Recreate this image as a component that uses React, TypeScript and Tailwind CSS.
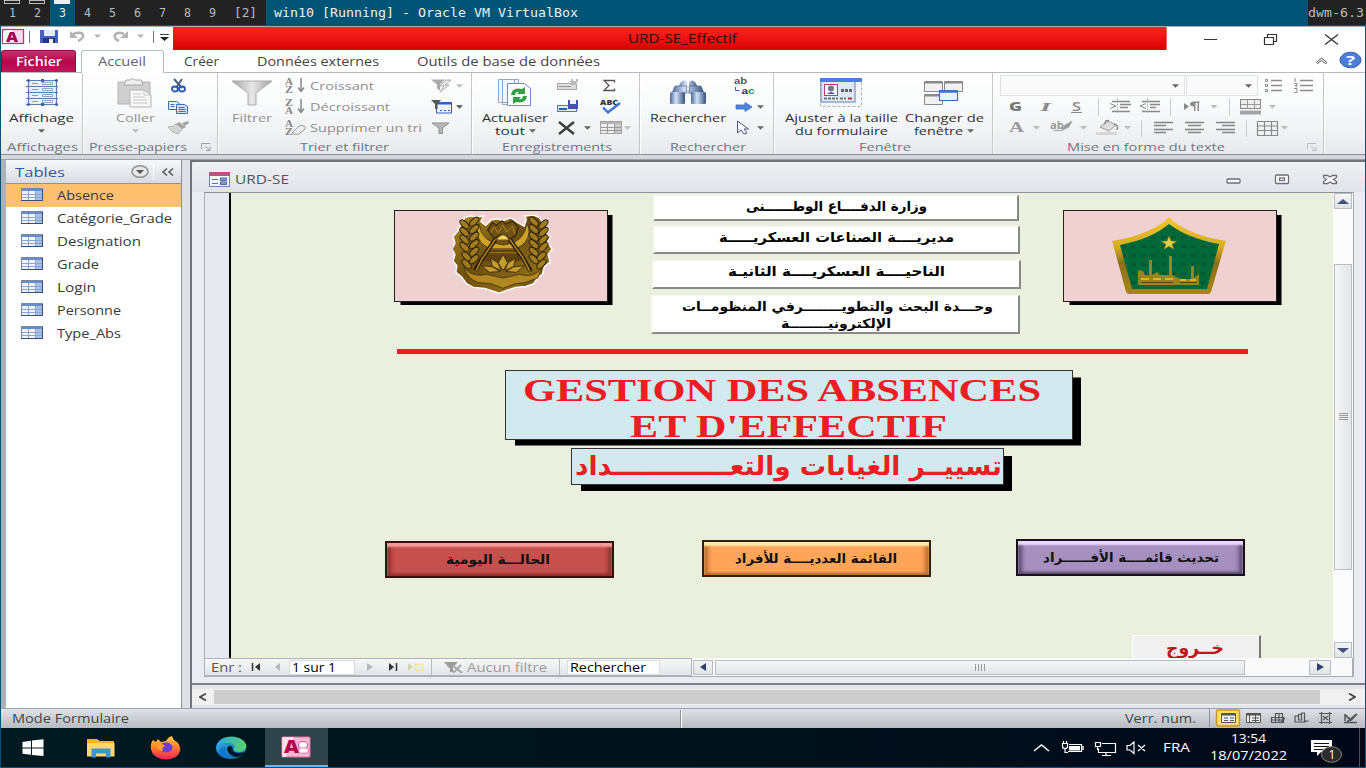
import React, { useLayoutEffect, useRef } from "react";

type P = { className?: string; children?: React.ReactNode };

/* Text stretched horizontally to fill the width of its box. */
function Fit({ className = "", children, rtl = false }: P & { rtl?: boolean }) {
  const outer = useRef<HTMLDivElement>(null);
  const inner = useRef<HTMLSpanElement>(null);
  useLayoutEffect(() => {
    const o = outer.current;
    const i = inner.current;
    if (o && i && i.offsetWidth > 0) {
      i.style.transform = `scaleX(${o.clientWidth / i.getBoundingClientRect().width})`;
    }
  }, []);
  return (
    <div ref={outer} className={`shrink-0 whitespace-nowrap text-left ${className}`}>
      <span ref={inner} dir={rtl ? "rtl" : "ltr"} className="inline-block origin-left">
        {children}
      </span>
    </div>
  );
}

function Arrow({ className = "", color = "#666" }: { className?: string; color?: string }) {
  return (
    <svg className={`shrink-0 ${className}`} width="7" height="4" viewBox="0 0 7 4">
      <path d="M0 0.3h7L3.5 3.8z" fill={color} />
    </svg>
  );
}

function Group({ className = "", label, launcher = "", children }: P & { label: React.ReactNode; launcher?: string }) {
  return (
    <div className={`flex shrink-0 flex-col border-r border-[#c3c7cc] shadow-[1px_0_0_#fff] ${className}`}>
      <div className="flex h-[67px]">{children}</div>
      <div className="flex h-[15px] items-center pt-px text-[#70757f]">
        {label}
        {launcher && (
          <svg className={`shrink-0 ${launcher}`} width="10" height="8" viewBox="0 0 10 8" fill="none" stroke="#9a9ea5">
            <path d="M0.5 6V0.5H9M4 3l4.5 4M9 3.5V7.5H5" />
          </svg>
        )}
      </div>
    </div>
  );
}

const lab = "leading-[14px] text-[11.5px] h-[14px]";
const dark = "leading-[14px] text-[11.5px] h-[14px] text-[#303030]";
const dark2 = "leading-[13px] text-[11.5px] h-[13px] text-[#303030]";
const mut = "leading-[14px] text-[11.5px] h-[14px] text-[#8f8f8f]";

function TableIcon({ muted = false }: { muted?: boolean }) {
  const s = muted ? "#a3a3a3" : "#7488ac";
  return (
    <svg width="22" height="13" viewBox="0 0 22 13" className="shrink-0">
      <rect x="0.5" y="0.5" width="21" height="12" fill={muted ? "#eee" : "#eef4fc"} stroke={s} />
      <rect x="1" y="1" width="20" height="2" fill={muted ? "#b5b5b5" : "#6c8cc4"} />
      <rect x="14" y="3" width="7" height="9" fill={muted ? "#ccc" : "#a9c0e6"} />
      <path d="M1 6.500h20M1 9.500h20M7.500 3v9M14.500 3v9" stroke={muted ? "#999" : "#8ea4c8"} fill="none" />
      {!muted && <path d="M0 12.500h22M21.500 1v12" stroke="#33507e" fill="none" />}
    </svg>
  );
}

function SortIcon({ a, b, eraser = false }: { a: string; b: string; eraser?: boolean }) {
  return (
    <svg width="22" height="18" viewBox="0 0 22 18" className="shrink-0">
      <text x="0" y="7.500" fontSize="9.500" fontFamily="Liberation Serif, serif" fontWeight="700" fill="#858585" textLength="8" lengthAdjust="spacingAndGlyphs">{a}</text>
      <text x="0" y="16.200" fontSize="9.500" fontFamily="Liberation Serif, serif" fontWeight="700" fill="#858585" textLength="8" lengthAdjust="spacingAndGlyphs">{b}</text>
      {eraser ? (
        <path d="M8 13l6-6q2-1 5 0 2 1 1 3l-6 5q-2 1-5 0-2-1-1-2z" fill="#eee" stroke="#999" />
      ) : (
        <path d="M16 1v13M13 10.500l3 4 3-4" fill="none" stroke="#888" strokeWidth="1.500" />
      )}
    </svg>
  );
}

function QuickAccess() {
  return (
    <svg width="172" height="23" viewBox="1 27 172 23" className="shrink-0">
      <rect x="2.500" y="29.500" width="21" height="14" fill="#f8dcea" stroke="#b63a78" strokeWidth="1.300" />
      <path d="M3 43V33l4-3h5L7 43z" fill="#fff" />
      <text x="6" y="42" fontSize="14" fontWeight="800" fontFamily="Open Sans, sans-serif" fill="#a50050" textLength="12" lengthAdjust="spacingAndGlyphs">A</text>
      <path d="M29.500 31v12M153.500 31v12" stroke="#777" />
      <rect x="40" y="30" width="18" height="13" fill="#4a5dc0" />
      <rect x="44" y="30" width="11" height="6" fill="#e4ebfa" />
      <rect x="43" y="38" width="12" height="5" fill="#27327c" />
      <rect x="49" y="39" width="4" height="4" fill="#eee" />
      <path d="M73 34q9-3 10 1 1 3-5 6" fill="none" stroke="#b3b3b3" strokeWidth="2.600" />
      <path d="M70 31v7h8z" fill="#b3b3b3" />
      <path d="M119 41q-6-3-4-6 2-4 9-1" fill="none" stroke="#b3b3b3" strokeWidth="2.600" />
      <path d="M128 31v7h-8z" fill="#b3b3b3" />
      <path d="M94 34.500h7l-3.500 3.500zM137 34.500h7l-3.500 3.500z" fill="#b5b5b5" />
      <path d="M160 34.500h9" stroke="#444" />
      <path d="M160 37h9l-4.500 4z" fill="#222" />
    </svg>
  );
}

function Tag({ n, on = false, box = false, solid = false }: { n: string; on?: boolean; box?: boolean; solid?: boolean }) {
  return (
    <div className={`relative flex w-[25px] items-center justify-center ${on ? "bg-[#005577] text-[#eee]" : "text-[#bbb]"}`}>
      {box && <i className="absolute left-1 top-0 h-1 w-4 border border-[#bbb]" />}
      {solid && <i className="absolute left-1 top-0 h-1 w-4 bg-[#eee]" />}
      <Fit className="w-[7px] text-center">{n}</Fit>
    </div>
  );
}

function Dwm() {
  return (
    <div className="flex h-[25px] bg-[#222] font-['DejaVu_Sans_Mono',monospace] text-[12.5px] leading-[25px]">
      <Tag n="1" box />
      <Tag n="2" box />
      <Tag n="3" on solid />
      <Tag n="4" />
      <Tag n="5" />
      <Tag n="6" />
      <Tag n="7" />
      <Tag n="8" />
      <Tag n="9" />
      <div className="flex w-[41px] pl-[9px] text-[#bbb]"><Fit className="w-[23px]">[2]</Fit></div>
      <div className="flex grow bg-[#005577] pl-2 text-[#eee]"><Fit className="w-[304px]">win10 [Running] - Oracle VM VirtualBox</Fit></div>
      <div className="w-[58px] text-[#bbb]"><Fit className="w-[56px]">dwm-6.3</Fit></div>
    </div>
  );
}

function TitleBar() {
  return (
    <div className="flex h-[23px] bg-white">
      <QuickAccess />
      <div className="flex w-[994px] items-center justify-center border-r border-[#e66] bg-linear-to-b from-[#ff2222] to-[#d90000] pl-[26px]">
        <Fit className="w-[109px] text-[12px] leading-[16px] text-[#3a0303]">URD-SE_Effectif</Fit>
      </div>
      <svg width="198" height="23" viewBox="1167 27 198 23" fill="none" stroke="#333">
        <path d="M1204 39.500h13" />
        <path d="M1264.500 37.500h9v7h-9zM1267.500 37v-2.500h9v7h-3" strokeWidth="1.200" />
        <path d="M1325 34.500l13 10M1338 34.500l-13 10" strokeWidth="1.300" />
      </svg>
    </div>
  );
}

function Tabs() {
  return (
    <div className="flex h-[23px] items-end border-b border-[#b4bbc3] bg-white text-[12px] leading-[21px] text-[#444]">
      <div className="flex h-[22px] w-[75px] justify-center rounded-t-[3px] border border-b-0 border-[#8e0b42] bg-linear-to-b from-[#cf2b6b] via-[#b3064a] to-[#c4145c] font-semibold text-white">
        <Fit className="w-[46px]">Fichier</Fit>
      </div>
      <div className="-mb-px ml-[5px] flex h-[23px] w-[83px] justify-center rounded-t-[3px] border border-b-0 border-[#b4bbc3] bg-white pr-px text-[#5d626d]">
        <Fit className="w-[48px]">Accueil</Fit>
      </div>
      <Fit className="ml-[20px] w-[35px]">Créer</Fit>
      <Fit className="ml-[38px] w-[122px]">Données externes</Fit>
      <Fit className="ml-[38px] w-[183px]">Outils de base de données</Fit>
      <svg className="ml-auto" width="54" height="22" viewBox="1311 51 54 22">
        <path d="M1316.500 63.500l5-4.500 5.500 4.500-1.500 1-4-3-4 3z" fill="#fff" stroke="#555" />
        <ellipse cx="1350.500" cy="61" rx="10.500" ry="7.800" fill="#4b7fd3" stroke="#2f5fb4" />
        <text x="1346" y="66" fontSize="13" fontWeight="700" fontFamily="Open Sans, sans-serif" fill="#fff" textLength="9" lengthAdjust="spacingAndGlyphs">?</text>
      </svg>
    </div>
  );
}

function Big({ className = "", icon, children, arrow }: P & { icon: React.ReactNode; arrow?: string }) {
  return (
    <div className={`flex shrink-0 flex-col items-center pt-[4px] ${className}`}>
      <div className="mb-[3px] flex h-[31px] items-center justify-center">{icon}</div>
      {children}
      {arrow && <Arrow className="mt-[4px]" color={arrow} />}
    </div>
  );
}

function Row({ className = "", children }: P) {
  return <div className={`flex h-[21px] items-center ${className}`}>{children}</div>;
}

function Ribbon() {
  return (
    <div className="flex h-[82px] border-b border-[#8b9097] bg-linear-to-b from-white via-[#f7f8f9] to-[#e7eaed]">
      <Group className="w-[82px]" label={<Fit className={`ml-[6px] w-[71px] ${lab}`}>Affichages</Fit>}>
        <Big
          className="w-[81px]"
          arrow="#666"
          icon={
            <svg width="34" height="29" viewBox="0 0 34 29">
              <rect x="4" y="3" width="27" height="23" fill="#e9eff8" />
              <path d="M1 2.500h32M1 8.500h32M1 14.500h32M1 20.500h32M1 26.500h32M3.500 1v27M31.500 1v27" stroke="#5b7cb2" strokeWidth="1.200" fill="none" />
              <path d="M7 5.500h6M7 11.500h6M7 17.500h6M7 23.500h6" stroke="#999" />
              <path d="M17.500 4.500h10v2h-10zM17.500 10.500h10v2h-10zM17.500 16.500h10v2h-10zM17.500 22.500h10v2h-10z" fill="#fff" stroke="#8fa0bb" />
              <path d="M2 1.500h3v2H2zM30 1.500h3v2h-3zM2 25.500h3v2H2zM30 25.500h3v2h-3zM16 1h3v3h-3zM16 25h3v3h-3z" fill="#3f62a0" />
            </svg>
          }
        >
          <Fit className={`w-[65px] ${dark}`}>Affichage</Fit>
        </Big>
      </Group>

      <Group className="w-[135px]" launcher="ml-[14px]" label={<Fit className={`ml-[6px] w-[98px] ${lab}`}>Presse-papiers</Fit>}>
        <Big
          className="ml-[29px] w-[46px]"
          arrow="#bbb"
          icon={
            <svg width="36" height="30" viewBox="0 0 36 30">
              <path d="M1 4h32v22H1z" fill="#d0cfcf" stroke="#b5b5b5" />
              <path d="M9 2h4q2-3 5 0h6l2 5H7z" fill="#eee" stroke="#aaa" />
              <path d="M13 12h14l7 5v12H13z" fill="#f7f7f7" stroke="#b4b4b4" />
              <path d="M27 12v5h7M16 16h8M16 19h12M16 22h14M16 25h14" stroke="#c6c6c6" fill="none" />
            </svg>
          }
        >
          <Fit className={`w-[39px] ${mut}`}>Coller</Fit>
        </Big>
        <div className="ml-[10px] flex flex-col pt-[2px]">
          <Row>
            <svg width="22" height="15" viewBox="0 0 22 15" fill="none">
              <path d="M6 1l8 9M14 1L8 10" stroke="#4b5f85" strokeWidth="2" />
              <ellipse cx="7" cy="11" rx="3" ry="2.500" stroke="#2c5cb5" strokeWidth="1.900" />
              <ellipse cx="14" cy="11" rx="3" ry="2.500" stroke="#2c5cb5" strokeWidth="1.900" />
            </svg>
          </Row>
          <Row>
            <svg width="22" height="14" viewBox="0 0 22 14" stroke="#3e6cb6">
              <path d="M.5 1.500h8l3 2v6H.5z" fill="#e5eefb" />
              <path d="M8.500 4.500h8l3 2v7h-11z" fill="#cfe0f8" />
              <path d="M10.500 7.500h6M10.500 9.500h7M10.500 11.500h7M2.500 4.500h4M2.500 6.500h4" />
            </svg>
          </Row>
          <Row>
            <svg width="22" height="15" viewBox="0 0 22 15">
              <path d="M0 7q5 0 8-3l7 4q-3 4-5 6Q3 12 0 7z" fill="#d6d6d6" stroke="#b0b0b0" />
              <path d="M8 4l3-2 7 5-4 2zM14 3l6-2 1 2-4 3z" fill="#a5a5a5" />
            </svg>
          </Row>
        </div>
      </Group>

      <Group className="w-[254px]" label={<Fit className={`ml-[82px] w-[89px] ${lab}`}>Trier et filtrer</Fit>}>
        <Big
          className="ml-[11px] w-[46px]"
          icon={
            <svg width="42" height="26" viewBox="0 0 42 26">
              <defs>
                <linearGradient id="fun" x1="0" x2="1"><stop offset="0" stopColor="#a2a2a2" /><stop offset=".5" stopColor="#e8e8e8" /><stop offset="1" stopColor="#a2a2a2" /></linearGradient>
              </defs>
              <path d="M1 1h40L25 13v12h-8V13z" fill="url(#fun)" stroke="#adadad" />
            </svg>
          }
        >
          <Fit className={`w-[40px] ${mut}`}>Filtrer</Fit>
        </Big>
        <div className="ml-[10px] flex w-[146px] flex-col pt-[2px]">
          <Row><SortIcon a="A" b="Z" /><Fit className={`ml-[3px] w-[64px] ${mut}`}>Croissant</Fit></Row>
          <Row><SortIcon a="Z" b="A" /><Fit className={`ml-[3px] w-[80px] ${mut}`}>Décroissant</Fit></Row>
          <Row><SortIcon a="A" b="Z" eraser /><Fit className={`ml-[3px] w-[112px] ${mut}`}>Supprimer un tri</Fit></Row>
        </div>
        <div className="flex flex-col pt-[2px]">
          <Row>
            <svg width="22" height="15" viewBox="0 0 22 15"><path d="M0 1.500h14L9 6.500v6l-3-2v-4z" fill="#a9a9a9" /><path d="M15 2l-6 6h4l-4 6 9-7h-4l6-5z" fill="#eee" stroke="#999" strokeWidth=".8" /></svg>
            <Arrow className="ml-[3px]" color="#bbb" />
          </Row>
          <Row>
            <svg width="22" height="15" viewBox="0 0 22 15"><rect x="5.500" y="3.500" width="15" height="10.500" fill="#e9f1fd" stroke="#2e62b9" /><path d="M5 3.500h16v2H5z" fill="#2e62b9" /><path d="M0 1h10L6.500 5v5H4V5z" fill="#555" /><path d="M9 11.500h2M13 11.500h2M17 11.500h2" stroke="#2e62b9" /></svg>
            <Arrow className="ml-[3px]" color="#555" />
          </Row>
          <Row>
            <svg width="20" height="12" viewBox="0 0 20 12"><path d="M1 1h17l-6.500 5v5.500H8V6z" fill="#b8b8b8" stroke="#909090" /></svg>
          </Row>
        </div>
      </Group>

      <Group className="w-[168px]" label={<Fit className={`ml-[30px] w-[110px] ${lab}`}>Enregistrements</Fit>}>
        <Big
          className="ml-[8px] w-[70px]"
          icon={
            <svg width="36" height="29" viewBox="0 0 36 29">
              <path d="M1.500 1.500h16v23h-16zM5.500 1.500h16v25h-16z" fill="#f2f6fc" stroke="#8ea6c8" />
              <path d="M10.500 5.500h17l6 5v17h-23z" fill="#fff" stroke="#6f8fbd" />
              <path d="M14 17q1-8 11-6l3-2v7h-8l2-2q-3-1-4 3zM30 18q-1 8-11 6l-3 2v-7h8l-2 2q3 1 4-3z" fill="#2fa044" />
            </svg>
          }
        >
          <Fit className={`w-[66px] ${dark2}`}>Actualiser</Fit>
          <div className="flex items-center gap-[4px]"><Fit className={`w-[30px] ${dark2}`}>tout</Fit><Arrow /></div>
        </Big>
        <div className="ml-[7px] flex w-[43px] flex-col pt-[2px]">
          <Row><svg width="22" height="13" viewBox="0 0 22 13"><rect x="0.500" y="4.500" width="19" height="6" fill="#ddd" stroke="#aaa" /><path d="M2 7.500h12" stroke="#999" /><path d="M14 0h2v2h3V0h2v3h-2v3h-5V3h-2V2h2z" fill="#b9b9b9" /></svg></Row>
          <Row><svg width="22" height="13" viewBox="0 0 22 13"><rect x="0.500" y="5.500" width="19" height="6" fill="#dfeafa" stroke="#4d79c4" /><path d="M2 9h8" stroke="#2b59b1" strokeWidth="2" /><path d="M11 0h10v9H11z" fill="#4a4fae" /><path d="M13 0h6v4h-6z" fill="#eef" /></svg></Row>
          <Row><svg width="20" height="14" viewBox="0 0 20 14"><path d="M2 1l15 12M17 1L2 13" stroke="#3c3c3c" strokeWidth="2.400" /></svg><Arrow className="ml-[7px]" /></Row>
        </div>
        <div className="flex flex-col pt-[2px]">
          <Row><svg width="22" height="13" viewBox="0 0 22 13"><path d="M14.500 3.500V1.500H4l5 5-5 5h10.500V9.500" stroke="#555" strokeWidth="1.300" fill="none" /></svg></Row>
          <Row>
            <svg width="22" height="17" viewBox="0 0 22 17"><text x="0" y="7" fontSize="7" fontFamily="Open Sans, sans-serif" fontWeight="800" fill="#333" textLength="18" lengthAdjust="spacingAndGlyphs">ABC</text><path d="M3 9.500l5 5L20 5" stroke="#3d74d6" strokeWidth="2.400" fill="none" /></svg>
          </Row>
          <Row><TableIcon muted /><Arrow className="ml-[2px]" color="#bbb" /></Row>
        </div>
      </Group>

      <Group className="w-[134px]" label={<Fit className={`ml-[30px] w-[76px] ${lab}`}>Rechercher</Fit>}>
        <Big
          className="ml-[6px] w-[84px]"
          icon={
            <svg width="38" height="25" viewBox="0 0 38 25">
              <defs>
                <linearGradient id="bino" x1="0" x2="1"><stop offset="0" stopColor="#4a6a9c" /><stop offset=".4" stopColor="#d3e2f8" /><stop offset="1" stopColor="#34517d" /></linearGradient>
              </defs>
              <path d="M12 2q3-3 6 0v8h2V2q3-3 6 0l4 7v5H8V9z" fill="url(#bino)" />
              <path d="M6 6h12l-1 7H3zM20 6h12l3 7H21z" fill="url(#bino)" stroke="#45618e" strokeWidth=".6" />
              <rect x="1" y="12" width="15" height="12" rx="1.500" fill="url(#bino)" />
              <rect x="22" y="12" width="15" height="12" rx="1.500" fill="url(#bino)" />
            </svg>
          }
        >
          <Fit className={`w-[76px] ${dark}`}>Rechercher</Fit>
        </Big>
        <div className="ml-[4px] flex flex-col pt-[2px]">
          <Row><svg width="22" height="20" viewBox="0 0 22 20" fontFamily="Liberation Sans, sans-serif" fontWeight="700"><text x="0" y="8" fontSize="8.500" fill="#555" textLength="13" lengthAdjust="spacingAndGlyphs">ab</text><text x="7.500" y="17.600" fontSize="8.500" fill="#333" textLength="13" lengthAdjust="spacingAndGlyphs">a<tspan fill="#18993b">c</tspan></text><path d="M1.500 11v3.500h4" stroke="#36a" fill="none" /></svg></Row>
          <Row><svg width="20" height="10" viewBox="0 0 20 10"><path d="M2 3h9V0.500L18 5l-7 4.500V7H2z" fill="#4f86e0" stroke="#2a5dba" strokeWidth=".7" /></svg><Arrow className="ml-[3px]" /></Row>
          <Row><svg width="20" height="15" viewBox="0 0 20 15"><path d="M3.500 1l11 8H10l3 4-3 1-3-4-3.500 3z" fill="#fff" stroke="#44597d" /></svg><Arrow className="ml-[3px]" /></Row>
        </div>
      </Group>

      <Group className="w-[219px]" label={<Fit className={`ml-[85px] w-[52px] ${lab}`}>Fenêtre</Fit>}>
        <Big
          className="ml-[8px] w-[118px]"
          icon={
            <svg width="42" height="29" viewBox="0 0 42 29">
              <rect x=".5" y=".5" width="41" height="28" fill="#f3f5f8" stroke="#b2b2b2" strokeDasharray="3 2" />
              <rect x="1" y="1" width="34" height="23" fill="#dfe8f6" stroke="#6382b7" />
              <rect x="0" y="0" width="42" height="4" fill="#4a80da" />
              <rect x="4.500" y="6.500" width="13" height="11" fill="#fff" stroke="#c03a6e" />
              <circle cx="11" cy="10.500" r="3" fill="#777" /><path d="M7 16q4-4 8 0z" fill="#35c" />
              <path d="M21 12.500h11" stroke="#666" strokeWidth="3" strokeDasharray="3 1" />
              <path d="M4 20.500h14M20 20.500h6" stroke="#777" strokeWidth="2" strokeDasharray="3 1" /><path d="M28 20.500h4" stroke="#a33" strokeWidth="2" />
            </svg>
          }
        >
          <Fit className={`w-[113px] ${dark2}`}>Ajuster à la taille</Fit>
          <Fit className={`w-[93px] ${dark2}`}>du formulaire</Fit>
        </Big>
        <Big
          className="ml-[1px] w-[86px]"
          icon={
            <svg width="40" height="26" viewBox="0 0 40 26" fill="#f1f1f1" stroke="#8a8a8a">
              <path d="M.5 1.500h18v10H.500zM20.500 1.500h18v10h-18zM.5 14.500h18v10H.500z" />
              <path d="M1 2.500h17M21 2.500h17M1 15.500h17" strokeWidth="2" />
              <rect x="15.500" y="10.500" width="18" height="10" fill="#eaf2fe" stroke="#3866bb" /><path d="M15 11.500h19" stroke="#3d74d6" strokeWidth="2.500" />
            </svg>
          }
        >
          <Fit className={`w-[79px] ${dark2}`}>Changer de</Fit>
          <div className="flex items-center gap-[4px]"><Fit className={`w-[49px] ${dark2}`}>fenêtre</Fit><Arrow /></div>
        </Big>
      </Group>

      <Group className="w-[331px]" launcher="ml-[82px] opacity-60" label={<Fit className={`ml-[74px] w-[158px] ${lab}`}>Mise en forme du texte</Fit>}>
        <div className="flex flex-col pt-[2px]">
          <Row className="pl-[7px]">
            <div className="flex h-[21px] w-[185px] items-center justify-end border border-[#dfe1e4] bg-[#fafafa] pr-[5px]"><Arrow /></div>
            <div className="ml-px flex h-[21px] w-[72px] items-center justify-end border border-[#dfe1e4] bg-[#fafafa] pr-[5px]"><Arrow /></div>
            <svg className="ml-[6px]" width="50" height="15" viewBox="0 0 50 15" stroke="#8b8b8b" fill="none">
              <path d="M7 2.500h11M7 7.500h11M7 12.500h11M36 2.500h13M36 7.500h13M36 12.500h13" strokeWidth="1.300" />
              <path d="M1.500 1.500h2v2h-2zM1.500 6.500h2v2h-2zM1.500 11.500h2v2h-2z" />
              <path d="M31 0v4M30 5.500h3v2h-2l2 1.500M30 10.500h3v4h-3" />
            </svg>
          </Row>
          <Row>
            <svg width="300" height="21" viewBox="993 96 300 21" fill="#8a8a8a">
              <text x="1009" y="111" fontSize="12.500" fontWeight="800" fontFamily="Open Sans, sans-serif" textLength="13" lengthAdjust="spacingAndGlyphs" fill="#777">G</text>
              <text x="1040" y="111" fontSize="13" fontStyle="italic" fontWeight="700" fontFamily="Liberation Serif, serif" textLength="11" lengthAdjust="spacingAndGlyphs">I</text>
              <text x="1072" y="110.500" fontSize="12" fontWeight="600" fontFamily="Open Sans, sans-serif" textLength="9" lengthAdjust="spacingAndGlyphs">S</text>
              <path d="M1071 112.500h11" stroke="#888" />
              <path d="M1098.500 98v18M1170.500 98v18M1229.500 98v18" stroke="#c9ccd1" />
              <path d="M1112 101.500h18M1120 104.500h11M1120 107.500h8M1112 111.500h18M1142 101.500h18M1150 104.500h10M1150 107.500h6M1142 111.500h18" stroke="#8a8a8a" strokeWidth="1.400" />
              <path d="M1117.500 99v14M1147.500 99v14" stroke="#999" strokeDasharray="1 1.500" />
              <path d="M1110 103.500l6 2.500-6 2.500M1146 103.500l-6 2.500 6 2.500" fill="none" stroke="#8a8a8a" />
              <path d="M1184 103l5 3.500-5 3.500zM1199 102v9h-1.500v-8h-2v8h-1.500v-4.500q-4 0-4-2.500t4-2.500h6v1z" />
              <path d="M1210.500 105h7l-3.500 3.500zM1269 105h7l-3.500 3.500z" fill="#bbb" />
              <rect x="1240.500" y="99.500" width="20" height="9" fill="#eee" stroke="#888" />
              <path d="M1247.500 100v9M1254.500 100v9M1241 104.500h20" stroke="#999" />
              <rect x="1240" y="110.500" width="21" height="4" fill="#a5a5a5" />
            </svg>
          </Row>
          <Row>
            <svg width="300" height="21" viewBox="993 117 300 21" fill="#9a9a9a">
              <text x="1009" y="131.500" fontSize="15" fontWeight="700" fontFamily="Liberation Serif, serif" textLength="15" lengthAdjust="spacingAndGlyphs">A</text>
              <text x="1050" y="129" fontSize="10" fontWeight="700" fontFamily="Open Sans, sans-serif" textLength="14" lengthAdjust="spacingAndGlyphs">ab</text>
              <path d="M1061 131l4-6 7-4-3 6zM1053 131q4-2 8 0" stroke="#aaa" strokeWidth=".8" />
              <path d="M1033 126h7l-3.500 3.500zM1080 126h7l-3.500 3.500zM1124 126h7l-3.500 3.500zM1281 126h7l-3.500 3.500z" fill="#bbb" />
              <path d="M1100 127l8-6 8 4-7 6z" fill="#ddd" stroke="#999" /><path d="M1105 124q0-5 4-3M1114 124q5 1 3 6" fill="none" stroke="#888" strokeWidth="1.500" />
              <rect x="1096" y="132" width="21" height="3" fill="#d8d5d5" />
              <path d="M1141.500 120v17M1246.500 120v17" stroke="#c9ccd1" />
              <path d="M1154 122.500h19M1154 125.500h12M1154 129.500h19M1154 132.500h12M1185 122.500h19M1188 125.500h13M1185 129.500h19M1188 132.500h13M1216 122.500h19M1222 125.500h13M1216 129.500h19M1222 132.500h13" stroke="#858585" strokeWidth="1.300" />
              <path d="M1257.500 121.500h20v14h-20zM1264.500 121v14M1271.500 121v14M1257 126h21M1257 130.500h21" fill="none" stroke="#888" strokeWidth="1.200" />
            </svg>
          </Row>
        </div>
      </Group>
    </div>
  );
}

const tables: [string, string][] = [
  ["Absence", "w-[57px]"],
  ["Catégorie_Grade", "w-[115px]"],
  ["Designation", "w-[84px]"],
  ["Grade", "w-[42px]"],
  ["Login", "w-[39px]"],
  ["Personne", "w-[64px]"],
  ["Type_Abs", "w-[64px]"],
];

function NavPane() {
  return (
    <div className="flex h-[548px] w-[176px] shrink-0 flex-col border-r border-[#8d9299] bg-white">
      <div className="flex h-[24px] shrink-0 items-center border-b border-[#8d929c] bg-linear-to-b from-[#f6f7f9] to-[#d8dce2]">
        <Fit className="ml-[9px] w-[50px] text-[13px] leading-[20px] text-[#34589c]">Tables</Fit>
        <svg className="ml-[66px]" width="46" height="20" viewBox="131 161 46 20">
          <ellipse cx="140" cy="170.500" rx="8" ry="5.800" fill="#e7e7e7" stroke="#8f8f8f" strokeWidth="1.500" />
          <path d="M136 169h8l-4 4z" fill="#555" />
          <path d="M153.500 162v17" stroke="#fff" />
          <path d="M167 167.500l-4 3.500 4 3.500M173 167.500l-4 3.500 4 3.500" fill="none" stroke="#555" strokeWidth="1.500" />
        </svg>
      </div>
      {tables.map(([name, w], i) => (
        <div key={name} className={`flex h-[23.15px] shrink-0 items-center pl-[15px] ${i === 0 ? "bg-[#ffc070]" : ""}`}>
          <div className="mb-[3px]"><TableIcon /></div>
          <Fit className={`ml-[14px] text-[12px] leading-[20px] text-[#3a3a3a] ${w}`}>{name}</Fit>
        </div>
      ))}
    </div>
  );
}

function GoldEmblem() {
  const leaves = [0, 1, 2, 3, 4, 5];
  return (
    <svg width="101" height="79" viewBox="451 216 105 84" preserveAspectRatio="none">
      <defs>
        <linearGradient id="gold" x1="0" y1="0" x2="1" y2="1">
          <stop offset="0" stopColor="#b08a20" /><stop offset=".45" stopColor="#6d4f10" /><stop offset=".75" stopColor="#8b6a1b" /><stop offset="1" stopColor="#4b3408" />
        </linearGradient>
      </defs>
      <path d="M463 219l6-2 7 1 7-1-3 6 5 4 6-6 6-1 6 2 8-3 7 5 7 4 2-7-1-4 9-1 6 3 5 8-1 5 7 8-3 5 5 7-4 6 2 8-6 5-2 8-5 3-4 7-8 3-11 1-17 6-15-5-12-1-7-4-5-7-6-5 1-7-4-5 2-7-3-6 3-6-2-7 5-6z" fill="url(#gold)" stroke="#fff" strokeWidth="1.500" />
      <path d="M478 225q2 20 25 23 22-2 25-23 5 10-2 20-8 9-23 9-15 0-23-9-6-9-2-20z" fill="#cfa22a" stroke="#4c360a" strokeWidth=".8" />
      <path d="M487 232l5-8 4 3 6-5 4 4 7-4 6 7-3 9-6 4-4-4-6-1-6 4z" fill="#6f5114" stroke="#302005" strokeWidth="1.200" />
      <path d="M490 235l4-6 4 6 5-8 4 7 6-6 2 8" fill="none" stroke="#b38d2b" />
      <path d="M497 242q6-9 12 0z" fill="#f3d25c" />
      {leaves.map((i) => (
        <g key={i} fill="#a07c20" stroke="#2f2006" strokeWidth="1">
          <ellipse cx={463 + (i > 3 ? 3 : 0)} cy={226 + i * 8} rx="6" ry="3" transform={`rotate(45 ${463} ${226 + i * 8})`} />
          <ellipse cx={473} cy={223 + i * 8} rx="6" ry="3" transform={`rotate(-45 473 ${223 + i * 8})`} />
          <ellipse cx={545 - (i > 3 ? 3 : 0)} cy={226 + i * 8} rx="6" ry="3" transform={`rotate(-45 545 ${226 + i * 8})`} />
          <ellipse cx={535} cy={223 + i * 8} rx="6" ry="3" transform={`rotate(45 535 ${223 + i * 8})`} />
        </g>
      ))}
      <path d="M487 251h32l5 12-21 8-22-8z" fill="#5f430d" />
      <path d="M489 252h28M487 256h32" stroke="#96701a" strokeWidth="1.500" />
      <path d="M495 242l-14 21-7 12M510 242l14 20 8 14" stroke="#2b1d07" strokeWidth="4.500" fill="none" />
      <path d="M495 242l-14 21-6 12M510 242l14 20 7 14" stroke="#b88b24" strokeWidth="1.500" fill="none" />
      <g fill="#c69b2f" stroke="#3c2908" strokeWidth=".9">
        <path d="M503 258l5 9-5 8-5-8zM490 262l8 5 3 8-9-4zM516 262l-8 5-3 8 9-4zM481 270l11 1 8 5-11 1zM525 270l-11 1-8 5 11 1z" />
      </g>
      <path d="M462 271q8 12 24 8l17 4 17-4q16 5 24-8l-5 12-13 5-10 1-13 5-13-5-12-1q-12-3-16-17z" fill="#b18722" stroke="#4c360a" />
    </svg>
  );
}

function GreenEmblem() {
  return (
    <svg width="118" height="82" viewBox="1110 215 118 82">
      <defs>
        <linearGradient id="edge" x1="0" y1="0" x2="0" y2="1"><stop offset="0" stopColor="#f2c62e" /><stop offset=".4" stopColor="#d6ab1f" /><stop offset=".6" stopColor="#8a6f1a" /><stop offset="1" stopColor="#a98612" /></linearGradient>
        <pattern id="dots" width="10" height="9" patternUnits="userSpaceOnUse"><rect width="10" height="9" fill="#00693a" /><rect x="1" y="2" width="5" height="3" fill="#0b5836" /></pattern>
      </defs>
      <path d="M1169 217l4 4q20 15 53 20l-1 3-14 48-2 2h-81l-2-2-13-48-1-3q33-5 53-20z" fill="url(#edge)" />
      <path d="M1169 224q18 14 50 20l-12 45h-75l-12-44q31-6 49-21z" fill="url(#dots)" />
      <path d="M1169 236l2 5 6 .3-5 3 2 5-5-3-5 3 2-5-5-3 6-.3z" fill="#e8cf3d" stroke="#8b7a1c" strokeWidth=".6" />
      <path d="M1138 285v-15l5 1 2 4h4v-15h3v15l5-3 3 3h9v-19h3v19l6 3 4 1h9v-13h3v12l5-4v11z" fill="#9a851c" />
      <path d="M1141 279h8M1153 279h8M1165 279h8M1180 280h6M1190 280h6" stroke="#d9b728" strokeWidth="2" /><path d="M1141 282.500h32M1180 282.500h17" stroke="#57470c" />
    </svg>
  );
}

const ar = "font-['DejaVu_Sans',sans-serif] font-bold";
const plate = "flex shrink-0 flex-col items-center border border-l-2 border-r-2 border-b-2 border-[#f7f7f4] border-r-[#888] border-b-[#8a8a8a] bg-white text-black";

function PinkBox({ className = "", children }: P) {
  return (
    <div className={`flex h-[92px] w-[214px] shrink-0 items-center justify-center border border-[#222] bg-[#efd1d1] shadow-[5.5px_4px_0_-1px_#000] ${className}`}>{children}</div>
  );
}

function MenuButton({ className = "", children }: P) {
  return <div className={`flex h-[37px] w-[229px] shrink-0 justify-center border-2 pt-[8px] text-[#111] ${className}`}>{children}</div>;
}

function FormBody() {
  return (
    <div className="h-[465px] w-[1102px] shrink-0 overflow-hidden bg-[#eaefde]">
      <div className="flex h-[141px]">
        <PinkBox className="ml-[163px] mt-[17px]"><div className="mb-[3px] ml-[5px]"><GoldEmblem /></div></PinkBox>
        <div className="ml-[43px] w-[370px] shrink-0 pt-[2px]">
          <div className={`ml-[2px] h-[26px] w-[366px] ${plate}`}><Fit rtl className={`mt-px w-[181px] text-[13.5px] leading-[18px] ${ar}`}>وزارة الدفــــاع الوطــــــنى</Fit></div>
          <div className={`ml-[2px] mt-[5px] h-[28px] w-[367px] ${plate}`}><Fit rtl className={`mt-px w-[235px] text-[13.5px] leading-[18px] ${ar}`}>مديريــــة الصناعات العسكريـــــة</Fit></div>
          <div className={`ml-px mt-[6px] h-[29px] w-[369px] ${plate}`}><Fit rtl className={`mt-px w-[217px] text-[13.5px] leading-[18px] ${ar}`}>الناحيــــة العسكريــــة الثانيـة</Fit></div>
          <div className={`mt-[6px] h-[39px] w-[369px] pl-[3px] ${plate}`}>
            <Fit rtl className={`mt-[2px] h-[17px] w-[311px] text-[13px] leading-[17px] ${ar}`}>وحـــدة البحث والتطويــــــــر‌في المنظومــات</Fit>
            <Fit rtl className={`mr-[3px] h-[17px] w-[110px] text-[13px] leading-[17px] ${ar}`}>الإلكترونيــــــــة</Fit>
          </div>
        </div>
        <PinkBox className="ml-[42px] mt-[17px]"><div className="mr-[2px]"><GreenEmblem /></div></PinkBox>
      </div>
      <div className="ml-[166px] mt-[15px] h-[5px] w-[851px] bg-[#ee1c23]" />
      <div className="ml-[274px] mt-[16px] flex h-[70px] w-[568px] flex-col items-center border border-[#333] bg-[#d1e9ef] pr-[1px] font-['Liberation_Serif',serif] text-[31px] font-bold leading-[36px] text-[#ee1c23] shadow-[9px_6.5px_0_-1px_#000]">
        <Fit className="mr-[13px] mt-[2px] w-[518px]">GESTION DES ABSENCES</Fit>
        <Fit className="w-[317px]">ET D'EFFECTIF</Fit>
      </div>
      <div className="ml-[340px] mt-[8px] flex h-[37px] w-[433px] justify-center border border-[#333] bg-[#d1e9ef] pl-[2px] shadow-[9px_7px_0_-1px_#000]">
        <Fit rtl className={`w-[427px] text-[26px] leading-[34px] text-[#ee1c23] ${ar}`}>تسييــر الغيابات والتعـــــــــــــداد</Fit>
      </div>
      <div className="mt-[54px] flex">
        <MenuButton className="ml-[154px] mt-[2px] border-[#38110f] bg-[#c6504e] shadow-[inset_0_4px_2px_#f39a98,inset_4px_0_4px_#8d2f2e,inset_-4px_0_4px_#8d2f2e,inset_0_-2px_2px_#9b3433]">
          <Fit rtl className={`mr-[4px] w-[104px] text-[13px] leading-[18px] ${ar}`}>الحالـــة اليومية</Fit>
        </MenuButton>
        <MenuButton className="ml-[88px] mt-px border-[#33200f] bg-[#ffa55a] shadow-[inset_0_4px_2px_#ffeaa8,inset_4px_0_4px_#b86a2c,inset_-4px_0_4px_#b86a2c,inset_0_-2px_2px_#c87838]">
          <Fit rtl className={`mr-[2px] w-[162px] text-[13px] leading-[18px] ${ar}`}>القائمة العدديــــة للأفراد</Fit>
        </MenuButton>
        <MenuButton className="ml-[85px] border-[#17121c] bg-[#a690bf] shadow-[inset_0_4px_2px_#ecd8ff,inset_4px_0_4px_#5b496c,inset_-4px_0_4px_#5b496c,inset_0_-2px_2px_#716083]">
          <Fit rtl className={`w-[176px] text-[13px] leading-[18px] ${ar}`}>تحديث قائمــــة الأفــــــراد</Fit>
        </MenuButton>
      </div>
      <div className="ml-[901px] mt-[57px] flex h-[40px] w-[129px] justify-center border-l border-r-2 border-t border-white border-r-[#777] bg-[#f0f0f0]">
        <Fit rtl className="mr-[3px] w-[58px] font-['DejaVu_Sans',sans-serif] text-[18px] font-bold leading-[23px] text-[#c0141c]">خــروج</Fit>
      </div>
    </div>
  );
}

const sbBtn = "flex shrink-0 items-center justify-center border border-[#b9bdc4] bg-linear-to-b from-[#f4f5f7] to-[#dfe2e6]";

function VScroll() {
  return (
    <div className="flex h-[465px] w-[20px] shrink-0 flex-col bg-[#fbfbfb] px-px">
      <div className={`h-[16px] ${sbBtn}`}><svg width="12" height="5" viewBox="0 0 12 5"><path d="M0 5l6-5 6 5z" fill="#42527a" /></svg></div>
      <div className="mt-[55px] flex h-[306px] items-center justify-center border border-[#b9bdc4] bg-linear-to-r from-[#f6f6f7] to-[#e2e4e8]">
        <svg width="9" height="8" viewBox="0 0 9 8"><path d="M0 .5h9M0 2.500h9M0 4.500h9M0 6.500h9" stroke="#999" /></svg>
      </div>
      <div className={`mt-auto h-[16px] ${sbBtn}`}><svg width="12" height="5" viewBox="0 0 12 5"><path d="M0 0l6 5 6-5z" fill="#42527a" /></svg></div>
    </div>
  );
}

function RecordBar() {
  return (
    <div className="flex h-[18px] items-center bg-[#fafafa] text-[12px] leading-[17px]">
      <div className="flex h-[18px] w-[487px] items-center border-b border-r border-t border-[#b0b4ba] bg-linear-to-b from-[#f6f7f8] to-[#e2e5e9]">
        <Fit className="ml-[6px] w-[31px] text-[#555]">Enr :</Fit>
        <svg className="ml-[7px]" width="33" height="11" viewBox="249 662 33 11"><path d="M252.500 663v8" stroke="#333" strokeWidth="1.500" /><path d="M260 663v8l-5-4z" fill="#333" /><path d="M280 663v8l-5-4z" fill="#b5b9bf" /></svg>
        <div className="ml-[7px] flex h-[15px] w-[66px] items-center border border-[#d7d9dc] bg-white pl-[2px] text-black"><Fit className="w-[44px]">1 sur 1</Fit></div>
        <svg className="ml-[7px]" width="66" height="11" viewBox="362 662 66 11"><path d="M367 663v8l6-4z" fill="#b5b9bf" /><path d="M389 663v8l5-4z" fill="#333" /><path d="M396.500 663v8" stroke="#333" strokeWidth="1.500" /><path d="M408 663v8l5-4z" fill="#ddd3b0" /><path d="M415.500 664.500h7v6h-7z" fill="none" stroke="#f0dfa0" strokeWidth="2" strokeDasharray="2 1" /></svg>
        <div className="ml-[3px] h-[16px] w-px bg-[#b7bbc1]" />
        <svg className="ml-[12px]" width="19" height="12" viewBox="0 0 19 12"><path d="M0 1h14L9 6v5H6V6z" fill="#999" /><path d="M1 1l5 6M8 4l10 8M17 4L9 12" stroke="#a5a5a5" strokeWidth="1.800" /></svg>
        <Fit className="ml-[4px] w-[80px] text-[#9b9b9b]">Aucun filtre</Fit>
        <div className="ml-[12px] h-[16px] w-px bg-[#b7bbc1]" />
        <div className="ml-[7px] flex h-[15px] w-[93px] items-center border border-[#dcdee0] bg-white pl-[2px] text-black"><Fit className="w-[76px]">Rechercher</Fit></div>
      </div>
      <div className={`ml-px h-[15px] w-[20px] ${sbBtn}`}><svg width="6" height="8" viewBox="0 0 6 8"><path d="M6 0v8L0 4z" fill="#2f426e" /></svg></div>
      <div className="ml-[2px] flex h-[15px] w-[530px] items-center justify-center border border-[#b9bdc4] bg-linear-to-b from-[#f6f6f7] to-[#e2e4e8]">
        <svg width="10" height="7" viewBox="0 0 10 7"><path d="M.5 0v7M3.500 0v7M6.500 0v7M9.500 0v7" stroke="#999" /></svg>
      </div>
      <div className={`ml-[64px] h-[15px] w-[22px] ${sbBtn}`}><svg width="7" height="8" viewBox="0 0 7 8"><path d="M0 0v8l7-4z" fill="#2f426e" /></svg></div>
    </div>
  );
}

function DocArea() {
  return (
    <div className="ml-[8px] flex h-[548px] w-[1176px] flex-col border-l-2 border-t-2 border-[#707378] bg-[#e2e5ea]">
      <div className="flex h-[523px] shrink-0 flex-col rounded-tl-[5px] border-b-2 border-[#7b8089] bg-[#e9ecf0]">
        <div className="flex h-[30px] shrink-0 items-center rounded-tl-[5px] bg-linear-to-b from-[#eef0f3] to-[#e1e4e9] pl-[17px] pt-[5px]">
          <svg width="21" height="15" viewBox="0 0 21 15"><rect x=".5" y=".5" width="20" height="14" fill="#f3f6fb" stroke="#6c83ab" /><rect width="21" height="4" fill="#b55680" /><path d="M3 7.500h6M3 11.500h6" stroke="#5574a8" /><path d="M11.500 6h6v2.500h-6zM11.500 10h6v2.500h-6z" fill="#8da3cd" stroke="#4b6698" /></svg>
          <Fit className="ml-[5px] w-[54px] text-[12.5px] leading-[18px] text-[#555]">URD-SE</Fit>
          <svg className="ml-auto mr-[27px]" width="114" height="14" viewBox="1225 173 114 14" fill="#fff" stroke="#6a6d7c" strokeWidth="1.300">
            <rect x="1227" y="179" width="13" height="4" rx="1" />
            <rect x="1275.500" y="175" width="13" height="8.500" rx="1" /><rect x="1279.500" y="178" width="5" height="2.500" />
            <path d="M1323.500 175.500h4l2.500 1.500 2.500-1.500h4v2l-3 2 3 2v2h-4l-2.500-1.500-2.500 1.500h-4v-2l3-2-3-2z" />
          </svg>
        </div>
        <div className="ml-[12px] flex h-[485px] w-[1150px] shrink-0 flex-col border border-r-2 border-[#a9adb4] border-t-[#8d9299]">
          <div className="flex">
            <div className="w-[24px] shrink-0 bg-[#e6eaf0]" />
            <div className="w-[2px] shrink-0 bg-black" />
            <FormBody />
            <VScroll />
          </div>
          <RecordBar />
        </div>
      </div>
      <div className="mt-[4px] flex h-[16px] w-[1174px] shrink-0 items-center bg-[#f0f0f0] px-[7px]">
        <svg width="8" height="8" viewBox="0 0 8 8"><path d="M7 .5L1 4l6 3.500" fill="none" stroke="#444" strokeWidth="1.700" /></svg>
        <div className="ml-[7px] h-[14px] w-[1106px] bg-[#cdcdcd]" />
        <svg className="ml-auto mr-[3px]" width="8" height="8" viewBox="0 0 8 8"><path d="M1 .5L7 4 1 7.500" fill="none" stroke="#444" strokeWidth="1.700" /></svg>
      </div>
    </div>
  );
}

function StatusBar() {
  return (
    <div className="flex h-[20px] items-center border-t border-[#9da3ab] bg-linear-to-b from-[#dfe2e6] to-[#b8bcc2] text-[12px] leading-[18px] text-[#444]">
      <Fit className="ml-[11px] w-[117px]">Mode Formulaire</Fit>
      <div className="ml-[551px] h-[18px] w-[2px] border-l border-[#8d9299] bg-white" />
      <Fit className="ml-[443px] w-[71px]">Verr. num.</Fit>
      <svg className="ml-[11px]" width="157" height="19" viewBox="1207 709 157 19" fill="none" stroke="#555">
        <path d="M1209.500 709v18" stroke="#8d9299" />
        <rect x="1216.500" y="710" width="23" height="16" rx="2" fill="#ffdc73" stroke="#c8932d" strokeWidth="1.500" />
        <path d="M1221.500 713.500h14v9h-14zM1246.500 713.500h14v9h-14z" fill="#eee" />
        <path d="M1221 714.500h15M1246 714.500h15" strokeWidth="2" />
        <path d="M1224 718h4M1230 718h4M1224 720.500h4M1230 720.500h4M1249.500 715v8M1252 718h7M1252 720.500h7M1255.500 715v8" />
        <path d="M1271.500 717.500h12v5h-12zM1275.500 713.500h7v9h-7zM1275.500 720h8M1279 714v8M1271 720h4M1281 722l4-4" strokeWidth="1.200" />
        <path d="M1298 716h-3v6h11M1298 714.500h3M1298.500 714v6h3v-7h3v8h4" strokeWidth="1.200" />
        <path d="M1319 713.500h13M1319 722.500h13M1321.500 712v12M1329.500 712v12M1323 716l2.500 2-2.500 2M1328 716l-2.500 2 2.500 2" strokeWidth="1.200" />
        <path d="M1345 714v7M1344 722.500h13" strokeWidth="1.500" /><path d="M1345 715l6 5 6-6M1347 722l10-8" strokeWidth="1.700" />
      </svg>
    </div>
  );
}

function Taskbar() {
  return (
    <div className="flex h-[39px] bg-linear-to-r from-[#001a22] via-[#00121c] to-[#000817] text-[13px] text-white">
      <svg width="264" height="39" viewBox="1 728 264 39" className="shrink-0">
        <defs>
          <linearGradient id="fx" x1="0" y1="0" x2="0" y2="1"><stop offset="0" stopColor="#ffd23e" /><stop offset=".5" stopColor="#ff7a27" /><stop offset="1" stopColor="#f3205c" /></linearGradient>
          <linearGradient id="eg" x1="0" y1="0" x2="1" y2="1"><stop offset="0" stopColor="#33b6f0" /><stop offset="1" stopColor="#0c59a4" /></linearGradient>
          <linearGradient id="eg2" x1="0" y1="0" x2="1" y2="0"><stop offset="0" stopColor="#2aa5e8" /><stop offset="1" stopColor="#57d46d" /></linearGradient>
        </defs>
        <path d="M22.500 742l8.500-1.200v6.700h-8.500zM32 740.600l11.500-1.300v8.200H32zM22.500 748.500H31v6.200l-8.500-1zM32 748.500h11.500v7.500L32 755z" fill="#fff" />
        <path d="M87 739h10l3 2h14v15H87z" fill="#f0b12c" /><path d="M87 743h27.500v13.500H87z" fill="#ffd767" /><path d="M91.500 757.500v-9h19v9h-4.500v-4h-10v4z" fill="#3d94da" />
        <path d="M153 740l3 2 2-3 3 3 5-1q2-4 6-5 1 4 5 6 4 4 3 9-2 8-14 8.500-13-1-15-10-1-6 2-9.500z" fill="url(#fx)" />
        <ellipse cx="166" cy="747.500" rx="6.500" ry="5" fill="#6c3fd0" /><path d="M155 743q8 0 10 3-4 2-2 5-6 0-8-8z" fill="#ff9a2b" />
        <ellipse cx="231" cy="748" rx="15" ry="11" fill="url(#eg)" />
        <path d="M216.500 745q3-8 14.500-8.500 14 1 15.500 9.500 0 5.500-7.500 6-6 0-5-3 2-5-4-6-8-1-13.500 2z" fill="url(#eg2)" />
        <path d="M227 749q1-4 4-3 2 1 1.500 3 0 3 5.500 4 4 0 7-1-3 5-9 5-8-2-9-8z" fill="#001620" /><path d="M226 747q-2 8 7 11-10 1-14-4-1-8 7-7z" fill="#1278cf" />
      </svg>
      <div className="flex w-[63px] shrink-0 items-center justify-center border-b-2 border-[#6fb7ea] bg-[#30454b]">
        <svg width="31" height="22" viewBox="0 0 31 22"><rect x="1" y="1" width="28" height="20" rx="1" fill="#f4b9d1" stroke="#e06f9f" /><path d="M1 1h12L5 21H1z" fill="#fff" opacity=".6" /><text x="3" y="17" fontSize="17" fontWeight="800" fontFamily="Open Sans, sans-serif" fill="#b2074f" textLength="15" lengthAdjust="spacingAndGlyphs">A</text><ellipse cx="22" cy="9" rx="4.500" ry="3.500" fill="#fff" stroke="#d44c87" /><path d="M18 12h9v5h-9z" fill="#fff" stroke="#d44c87" strokeWidth=".6" /></svg>
      </div>
      <svg width="120" height="39" viewBox="1029 728 120 39" className="ml-auto shrink-0" fill="none" stroke="#fff" strokeWidth="1.400">
        <path d="M1034 751l7.500-6 7.500 6" />
        <path d="M1062.500 743.500h5v3q0 2-2.500 2t-2.500-2zM1063.500 741v2M1066.500 741v2M1065 748.500v4h3M1069 744.500h12.500v7H1068" strokeWidth="1.200" /><path d="M1069 746h11v4.500h-11z" fill="#fff" stroke="none" /><path d="M1083 746v4" />
        <path d="M1102 743.500h13.500v9h-17v-4M1095.500 742.500h5v4h-5zM1097.500 747v3M1106 753v2M1102 755.500h9" strokeWidth="1.200" />
        <path d="M1127 745.500h3l4-3.500v11.500l-4-3.500h-3zM1138 745l7 6M1145 745l-7 6" strokeWidth="1.200" />
      </svg>
      <Fit className="ml-[14px] w-[27px] self-center text-[12.5px] leading-[20px]">FRA</Fit>
      <div className="ml-[20px] flex flex-col items-center pt-[2px]">
        <Fit className="w-[35px] text-[12px] leading-[17px]">13:54</Fit>
        <Fit className="w-[77px] text-[12px] leading-[17px]">18/07/2022</Fit>
      </div>
      <svg width="78" height="39" viewBox="1287 728 78 39" className="shrink-0">
        <path d="M1311 740h21v12h-11l-4 4v-4h-6z" fill="#fff" /><path d="M1314 743.500h15M1314 746.500h15M1314 749.500h9" stroke="#111" />
        <ellipse cx="1331.500" cy="754.500" rx="10" ry="7.800" fill="#2b2b2b" stroke="#888" />
        <text x="1328.500" y="759" fontSize="12" fontFamily="Open Sans, sans-serif" fill="#fff">1</text>
        <path d="M1359.500 728v39" stroke="#47505c" />
      </svg>
    </div>
  );
}

export default function App() {
  return (
    <div className="h-[768px] w-[1366px] overflow-hidden bg-[#005577] font-['Open_Sans','Noto_Sans',sans-serif] text-[12px]">
      <Dwm />
      <div className="mx-px mt-px flex h-[741px] flex-col overflow-hidden border-t border-[#aaa] bg-[#dfe3e8]">
        <TitleBar />
        <Tabs />
        <Ribbon />
        <div className="h-[5px] border-b border-[#9ba0a7] bg-[#d3d7dc]" />
        <div className="flex h-[548px] bg-[#dde0e5]">
          <div className="w-[5px] shrink-0 bg-[#aab1bb]" />
          <NavPane />
          <DocArea />
        </div>
        <StatusBar />
        <Taskbar />
      </div>
    </div>
  );
}
